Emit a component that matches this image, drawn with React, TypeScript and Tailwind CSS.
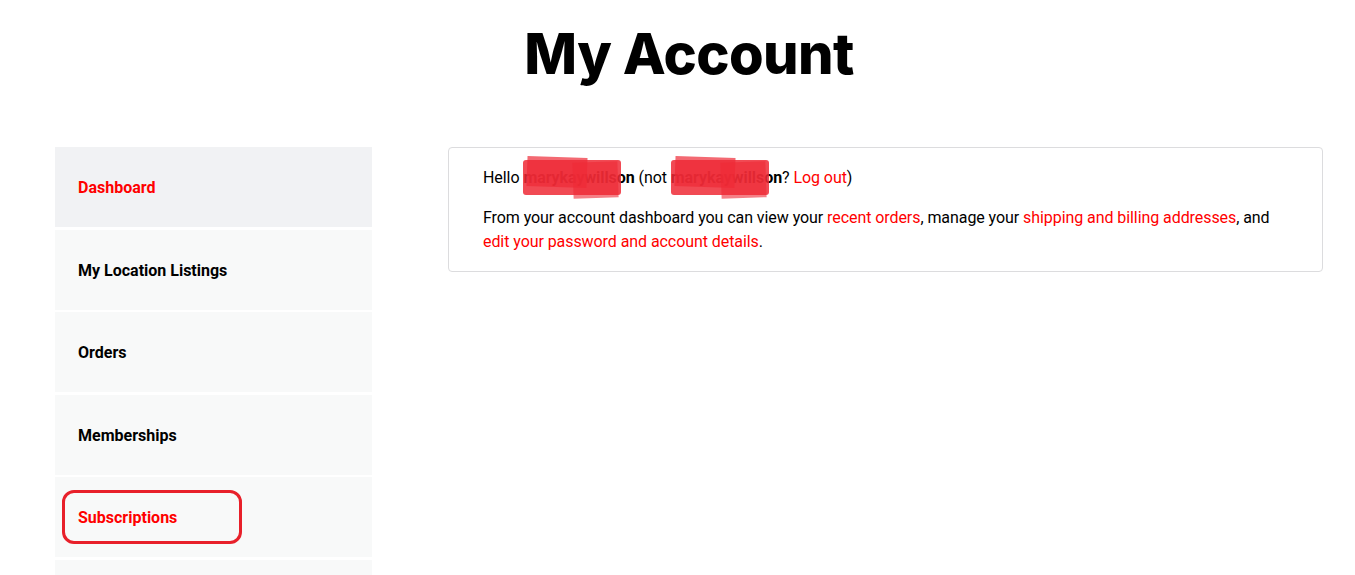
const menu = [
  { label: "Dashboard", active: true },
  { label: "My Location Listings" },
  { label: "Orders" },
  { label: "Memberships" },
  { label: "Subscriptions", red: true },
  { label: "" },
];

function Redact() {
  // scribbled red marker over the username
  return (
    <span className="pointer-events-none absolute inset-0">
      <span className="absolute left-[0px] top-[-8px] h-[35px] w-[98px] rounded-[3px] bg-[#ee2a36]/85" />
      <span className="absolute left-[4px] top-[-11px] h-[30px] w-[60px] rotate-[2deg] bg-[#ee2a36]/70" />
      <span className="absolute left-[50px] top-[-6px] h-[36px] w-[45px] -rotate-[2deg] bg-[#ee2a36]/60" />
    </span>
  );
}

export default function App() {
  return (
    <div className="h-[575px] overflow-hidden bg-white pl-[55px] pr-[32px] text-black" style={{ fontFamily: "Roboto, 'Liberation Sans', sans-serif" }}>
      <h1
        className="pt-[22px] pb-[61px] text-center text-[56px] font-extrabold leading-[64px] tracking-[-0.6px]"
        style={{ fontFamily: "Inter, 'Liberation Sans', sans-serif" }}
      >
        My Account
      </h1>
      <div className="flex gap-[76px]">
        <nav className="relative flex w-[317px] shrink-0 flex-col gap-[2.5px]">
          {menu.map((m, i) => (
            <a
              key={i}
              className={`flex h-[80px] shrink-0 items-center pl-[23px] pt-[2px] text-[16px] font-bold ${m.active ? "bg-[#f1f2f4] text-[#f00]" : "bg-[#f8f9f9]"} ${m.red ? "text-[#f00]" : ""}`}
            >
              {m.label}
            </a>
          ))}
          <div className="absolute left-[7px] top-[343px] h-[54px] w-[180px] rounded-[12px] border-[3.5px] border-[#e8202a]" />
        </nav>
        <div className="h-[125px] flex-1 rounded-[4px] border border-[#dcdcde] px-[34px] pt-[18px] pb-[16px] text-[16px] leading-[24px] tracking-[-0.07px]">
          <p>
            Hello{" "}
            <span className="relative">
              <strong>marykaywillson</strong>
              <Redact />
            </span>{" "}
            (not{" "}
            <span className="relative">
              <strong>marykaywillson</strong>
              <Redact />
            </span>
            ? <a className="text-[#f00]">Log out</a>)
          </p>
          <p className="mt-[16px]">
            From your account dashboard you can view your <a className="text-[#f00]">recent orders</a>, manage your{" "}
            <a className="text-[#f00]">shipping and billing addresses</a>, and <a className="text-[#f00]">edit your password and account details</a>.
          </p>
        </div>
      </div>
    </div>
  );
}
